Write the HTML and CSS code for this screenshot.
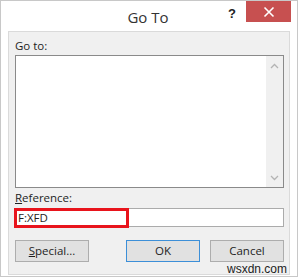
FILE: index.html
```html
<!DOCTYPE html>
<html>
<head>
<meta charset="utf-8">
<link rel="stylesheet" href="styles.css">
</head>
<body>
<div class="window">
  <div class="titlebar">
    <span class="title">Go To</span>
    <span class="help">?</span>
    <span class="close">
      <svg width="12" height="12" viewBox="0 0 12 12"><path d="M1.5 1.5 L10.5 10.5 M10.5 1.5 L1.5 10.5" stroke="#fff" stroke-width="1.6" fill="none"/></svg>
    </span>
  </div>
  <div class="panel">
    <div class="label">Go to:</div>
    <div class="list">
      <div class="list-body"></div>
      <div class="scroll">
        <svg width="9" height="6" viewBox="0 0 9 6"><path d="M1 5 L4.5 1.5 L8 5" stroke="#b4b4b4" stroke-width="1.3" fill="none"/></svg>
        <svg width="9" height="6" viewBox="0 0 9 6"><path d="M1 1 L4.5 4.5 L8 1" stroke="#b4b4b4" stroke-width="1.3" fill="none"/></svg>
      </div>
    </div>
    <div class="label label-ref"><u>R</u>eference:</div>
    <div class="input">
      <span class="input-text">F:XFD</span>
      <span class="highlight"></span>
    </div>
    <div class="buttons">
      <button class="btn"><u>S</u>pecial...</button>
      <button class="btn btn-default">OK</button>
      <button class="btn">Cancel</button>
    </div>
  </div>
  <span class="watermark">wsxdn.com</span>
</div>
</body>
</html>
```
FILE: styles.css
```css
* { box-sizing: border-box; }
html, body { margin: 0; padding: 0; background: #fff; }
body { font-family: "Open Sans", "Noto Sans", sans-serif; color: #1e1e1e; }

.window {
  position: relative;
  width: 298px;
  height: 277px;
  border: 1px solid #c8c8c8;
  background: #fff;
  display: flex;
  flex-direction: column;
}

.titlebar {
  position: relative;
  height: 30px;
  display: flex;
  align-items: center;
  justify-content: center;
}
.title {
  font-size: 15px;
  color: #333;
  margin-top: 2px;
  margin-left: -2px;
}
.help {
  position: absolute;
  left: 227px;
  top: 5px;
  font-size: 13px;
  font-weight: bold;
  color: #222;
  font-family: "Liberation Sans", sans-serif;
}
.close {
  position: absolute;
  left: 245px;
  top: 0;
  width: 45px;
  height: 21px;
  background: #c75050;
  display: flex;
  align-items: center;
  justify-content: center;
}

.panel {
  margin: 0 7px;
  height: 244px;
  background: #f0f0f0;
  border: 1px solid #dadada;
  padding: 6px 5px 0 6px;
  display: flex;
  flex-direction: column;
}

.label {
  font-size: 11.5px;
  line-height: 15px;
  height: 15px;
}
.label-ref { margin-top: 2px; }

.list {
  margin-top: 2px;
  height: 133px;
  border: 1px solid #8a8a8a;
  background: #fff;
  display: flex;
}
.list-body { flex: 1; }
.scroll {
  width: 17px;
  background: #f0f0f0;
  display: flex;
  flex-direction: column;
  justify-content: space-between;
  align-items: center;
  padding: 7px 0 6px 0;
}

.input {
  position: relative;
  margin-top: 3px;
  height: 19px;
  border: 1px solid #ababab;
  background: #fff;
  font-size: 11.5px;
  line-height: 17px;
  padding-left: 2px;
}
.highlight {
  position: absolute;
  left: -2px;
  top: -1px;
  width: 115px;
  height: 20px;
  border: 3px solid #e8141c;
}

.buttons {
  margin-top: 13px;
  display: flex;
  justify-content: space-between;
}
.btn {
  width: 74px;
  height: 22px;
  background: #e1e1e1;
  border: 1px solid #adadad;
  font-family: "Open Sans", "Noto Sans", sans-serif;
  font-size: 11.5px;
  color: #1e1e1e;
  padding: 0;
  line-height: 18px;
}
.btn-default {
  border-color: #3c8fd8;
  margin-left: 37px;
  margin-right: 10px;
}

.watermark {
  position: absolute;
  right: 10px;
  bottom: 0px;
  font-size: 12px;
  color: #222;
  font-family: "Liberation Sans", sans-serif;
  line-height: 14px;
}
```
